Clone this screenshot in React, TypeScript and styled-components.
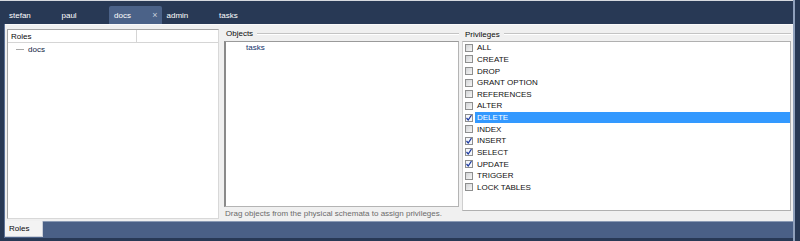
import styled, { createGlobalStyle } from "styled-components";

const privileges = [
  { name: "ALL", checked: false },
  { name: "CREATE", checked: false },
  { name: "DROP", checked: false },
  { name: "GRANT OPTION", checked: false },
  { name: "REFERENCES", checked: false },
  { name: "ALTER", checked: false },
  { name: "DELETE", checked: true, selected: true },
  { name: "INDEX", checked: false },
  { name: "INSERT", checked: true },
  { name: "SELECT", checked: true },
  { name: "UPDATE", checked: true },
  { name: "TRIGGER", checked: false },
  { name: "LOCK TABLES", checked: false },
];

const tabs = ["stefan", "paul", "docs", "admin", "tasks"];

const GlobalStyle = createGlobalStyle`
  html, body {
    margin: 0;
    padding: 0;
    background: #283955;
  }
  body {
    font-family: "Liberation Sans", Arial, sans-serif;
    font-size: 8px;
  }
`;

const App = () => {
  return (
    <>
      <GlobalStyle />
      <Window>
        <Main>
          <TopLine />
          <TabBar>
            {tabs.map((tab) => (
              <Tab key={tab} active={tab === "docs"}>
                {tab}
                {tab === "docs" && <Close>×</Close>}
              </Tab>
            ))}
          </TabBar>
          <Body>
            <Content>
              <RolesBox>
                <Header>
                  <HeaderCell>Roles</HeaderCell>
                  <HeaderCell />
                </Header>
                <TreeRow>
                  <TreeLine />
                  docs
                </TreeRow>
              </RolesBox>
              <ObjectsColumn>
                <GroupLabel>
                  <span>Objects</span>
                  <Rule />
                </GroupLabel>
                <ObjectsBox>
                  <ObjectItem>tasks</ObjectItem>
                </ObjectsBox>
                <Hint>Drag objects from the physical schemata to assign privileges.</Hint>
              </ObjectsColumn>
              <PrivilegesColumn>
                <GroupLabel>
                  <span>Privileges</span>
                  <Rule />
                </GroupLabel>
                <PrivilegesBox>
                  {privileges.map((p) => (
                    <PrivRow key={p.name}>
                      <Check checked={p.checked}>
                        {p.checked && (
                          <svg width="8" height="8" viewBox="0 0 8 8">
                            <path d="M1.5 4 L3.2 6 L6.5 1.2" fill="none" stroke="#1d3aa0" strokeWidth="1.2" />
                          </svg>
                        )}
                      </Check>
                      <PrivLabel selected={!!p.selected}>{p.name}</PrivLabel>
                    </PrivRow>
                  ))}
                </PrivilegesBox>
              </PrivilegesColumn>
            </Content>
            <BottomBar>
              <BottomTab>Roles</BottomTab>
            </BottomBar>
          </Body>
          <BottomEdge />
        </Main>
        <RightEdge />
      </Window>
    </>
  );
};

const Window = styled.div`
  width: 800px;
  height: 241px;
  display: flex;
  overflow: hidden;
  background: #283955;
`;

const Main = styled.div`
  flex: 1;
  display: flex;
  flex-direction: column;
`;

const TopLine = styled.div`
  height: 1px;
  background: #d6d9df;
`;

const TabBar = styled.div`
  height: 23px;
  display: flex;
  align-items: flex-end;
  padding-left: 4px;
`;

const Tab = styled.div<{ active?: boolean }>`
  width: 52.5px;
  height: 18px;
  box-sizing: border-box;
  padding: 0 5px;
  display: flex;
  align-items: center;
  justify-content: space-between;
  color: #ffffff;
  border-radius: 2px 2px 0 0;
  background: ${({ active }) => (active ? "#4b6288" : "transparent")};
`;

const Close = styled.span`
  color: #c8d0dc;
  font-size: 9px;
  margin-right: -1px;
`;

const Body = styled.div`
  flex: 1;
  margin-left: 4px;
  border-left: 1px solid #5d7399;
  display: flex;
  flex-direction: column;
`;

const Content = styled.div`
  height: 197px;
  box-sizing: border-box;
  background: #f0f0f0;
  border-top: 1px solid #fafafa;
  padding: 4px 0 2px 2px;
  display: flex;
`;

const RolesBox = styled.div`
  width: 212px;
  background: #ffffff;
  border: 1px solid #a5a5a5;
  border-right-color: #d8d8d8;
  border-bottom-color: #d8d8d8;
  box-sizing: border-box;
`;

const Header = styled.div`
  height: 12px;
  display: grid;
  grid-template-columns: 129px 1fr;
  border-bottom: 1px solid #d5d5d5;
`;

const HeaderCell = styled.div`
  padding-left: 3px;
  line-height: 13px;
  color: #0a0a0a;
  border-right: 1px solid #d5d5d5;
  &:last-child {
    border-right: none;
  }
`;

const TreeRow = styled.div`
  height: 10px;
  margin-top: 1px;
  display: flex;
  align-items: center;
  padding-left: 8px;
  color: #10223f;
`;

const TreeLine = styled.span`
  width: 8px;
  height: 1px;
  background: #a8a8a8;
  margin-right: 4px;
`;

const ObjectsColumn = styled.div`
  width: 237px;
  margin-left: 3px;
  display: flex;
  flex-direction: column;
`;

const GroupLabel = styled.div`
  height: 10px;
  display: flex;
  align-items: center;
  padding-left: 4px;
  color: #0a0a0a;
`;

const Rule = styled.div`
  flex: 1;
  height: 0;
  margin-left: 4px;
  border-top: 1px solid #c4c4c4;
  border-bottom: 1px solid #ffffff;
`;

const ObjectsBox = styled.div`
  height: 168px;
  margin: 2px 0 0 2px;
  box-sizing: border-box;
  background: #ffffff;
  border: 1px solid #b4b4b4;
  border-left: 2px solid #8a8a8a;
  border-top-color: #9a9a9a;
`;

const ObjectItem = styled.div`
  height: 12px;
  line-height: 12px;
  padding-left: 20px;
  color: #10306a;
`;

const Hint = styled.div`
  padding: 2px 0 0 3px;
  color: #6b6b6b;
  line-height: 10px;
`;

const PrivilegesColumn = styled.div`
  flex: 1;
  margin-left: 2px;
  padding-right: 2px;
  display: flex;
  flex-direction: column;
`;

const PrivilegesBox = styled.div`
  height: 170px;
  margin: 2px 0 0 1px;
  box-sizing: border-box;
  background: #ffffff;
  border: 1px solid #b0b0b0;
  border-left-color: #cfcfcf;
`;

const PrivRow = styled.div`
  height: 11.63px;
  display: flex;
  align-items: center;
  padding-left: 2px;
`;

const Check = styled.div<{ checked: boolean }>`
  width: 8px;
  height: 8px;
  box-sizing: border-box;
  border: 1px solid #8e8f8f;
  background: ${({ checked }) =>
    checked ? "#f4f6fa" : "linear-gradient(135deg, #d2d4d6, #f6f6f6)"};
  display: flex;
  align-items: center;
  justify-content: center;
  svg {
    margin: -1px;
  }
`;

const PrivLabel = styled.div<{ selected: boolean }>`
  flex: 1;
  height: 11px;
  line-height: 11px;
  margin-left: 2px;
  padding-left: 2px;
  color: ${({ selected }) => (selected ? "#ffffff" : "#101010")};
  background: ${({ selected }) => (selected ? "#3399ff" : "transparent")};
`;

const BottomBar = styled.div`
  flex: 1;
  background: #4a6086;
  border-top: 1px solid #8a9ab4;
`;

const BottomTab = styled.div`
  width: 38px;
  height: 16px;
  box-sizing: border-box;
  background: #f3f3f3;
  border-right: 1px solid #c9ced8;
  border-bottom: 1px solid #c9ced8;
  padding-left: 4px;
  line-height: 16px;
  color: #0a0a0a;
  margin-top: -1px;
`;

const BottomEdge = styled.div`
  height: 3px;
`;

const RightEdge = styled.div`
  width: 5px;
  border-left: 2px solid #8fa0bb;
`;

export default App;
